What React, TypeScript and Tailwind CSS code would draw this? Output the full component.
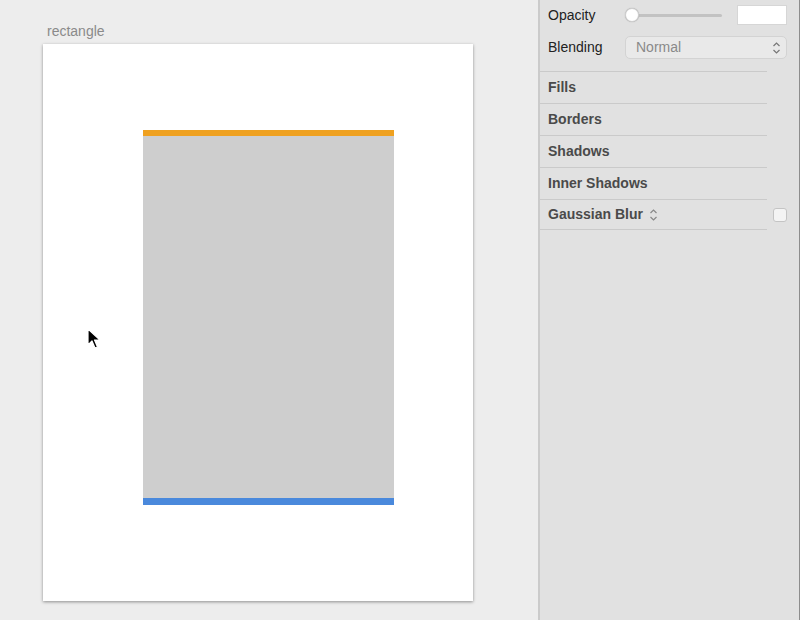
function UpDown({ className = "" }: { className?: string }) {
  return (
    <svg width="9" height="14" viewBox="0 0 9 14" className={className} fill="none" stroke="currentColor" strokeWidth="1.2">
      <path d="M1.5 5 L4.5 2 L7.5 5" />
      <path d="M1.5 9 L4.5 12 L7.5 9" />
    </svg>
  );
}

function Cursor() {
  return (
    <svg width="14" height="22" viewBox="0 0 14 22" className="absolute left-[87px] top-[328px]">
      <path d="M1 1 L1 17 L5 13 L8 20 L10.5 19 L7.5 12 L13 12 Z" fill="#000" stroke="#fff" strokeWidth="1.2" strokeLinejoin="round" />
    </svg>
  );
}

const sections = ["Fills", "Borders", "Shadows", "Inner Shadows"];

export default function App() {
  return (
    <div className="flex h-[620px] w-[800px] overflow-hidden font-['Liberation_Sans',Arial,sans-serif]">
      <div className="relative w-[538px] bg-[#ededed] pl-[43px] pt-[22px]">
        <div className="h-[22px] pl-1 text-[14px] leading-[18px] text-[#8a8a8a]">rectangle</div>
        <div className="h-[557px] w-[430px] bg-white pl-[100px] pt-[86px] shadow-[0_1px_3px_rgba(0,0,0,0.4)]">
          <div className="flex h-[375px] w-[251px] flex-col bg-[#cecece]">
            <div className="h-[6px] bg-[#efa120]"></div>
            <div className="flex-1"></div>
            <div className="h-[7px] bg-[#4a89dc]"></div>
          </div>
        </div>
        <Cursor />
      </div>

      <div className="w-[262px] border-l-2 border-r border-l-[#cbcbcb] border-r-[#8d8d8d] bg-[#e1e1e1] text-[14px]">
        <div className="h-[71px] pt-[5px]">
          <div className="flex h-[20px] items-center pl-[8px] pr-[12px]">
            <span className="w-[78px] text-[#222]">Opacity</span>
            <div className="relative flex h-[14px] w-[98px] items-center">
              <div className="ml-[6px] h-[3px] w-[90px] rounded-full bg-[#c2c2c2]"></div>
              <div className="absolute left-[-1px] top-0 h-[14px] w-[14px] rounded-full border border-[#cfcfcf] bg-white shadow-[0_0_1px_rgba(0,0,0,0.3)]"></div>
            </div>
            <div className="ml-auto h-[20px] w-[50px] border border-[#d6d6d6] bg-white"></div>
          </div>
          <div className="mt-[11px] flex h-[23px] items-center pl-[8px] pr-[12px]">
            <span className="w-[77px] text-[#222]">Blending</span>
            <div className="flex h-[23px] flex-1 items-center rounded-[5px] border border-[#d3d3d3] bg-[#e9e9e9] pl-[10px] pr-[5px] text-[#8a8a8a]">
              <span>Normal</span>
              <UpDown className="ml-auto text-[#777]" />
            </div>
          </div>
        </div>

        {sections.map((s) => (
          <div key={s} className="flex h-[32px] w-[227px] items-center border-t border-[#cacaca] pl-[8px] font-bold text-[#4a4a4a]">
            {s}
          </div>
        ))}
        <div className="flex h-[30px] items-center border-t border-[#cacaca] pl-[8px] pr-[12px] font-bold text-[#4a4a4a] [border-image:linear-gradient(to_right,#cacaca_226px,transparent_226px)_1]">
          <span>Gaussian Blur</span>
          <UpDown className="ml-[6px] text-[#888]" />
          <div className="ml-auto h-[14px] w-[14px] rounded-[3px] border border-[#c4c4c4] bg-[#f4f4f4]"></div>
        </div>
        <div className="h-px w-[227px] bg-[#cacaca]"></div>
      </div>
    </div>
  );
}
